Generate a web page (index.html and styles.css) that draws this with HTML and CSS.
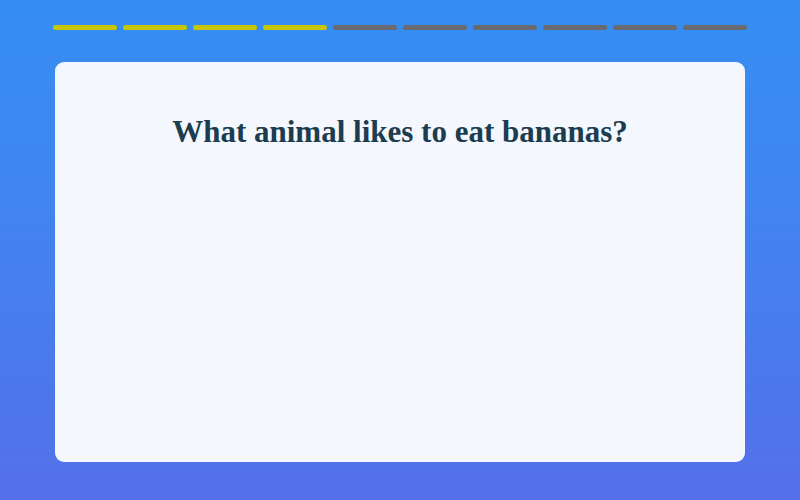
FILE: index.html
```html
<!DOCTYPE html>
<html>
<head>
<meta charset="utf-8">
<link rel="stylesheet" href="styles.css">
</head>
<body>
<div class="page">
  <div class="progress">
    <span class="seg done"></span>
    <span class="seg done"></span>
    <span class="seg done"></span>
    <span class="seg done"></span>
    <span class="seg"></span>
    <span class="seg"></span>
    <span class="seg"></span>
    <span class="seg"></span>
    <span class="seg"></span>
    <span class="seg"></span>
  </div>
  <div class="card">
    <h1 class="question">What animal likes to eat bananas?</h1>
  </div>
</div>
</body>
</html>
```
FILE: styles.css
```css
html, body {
  margin: 0;
  padding: 0;
  height: 100%;
}
body {
  background: linear-gradient(180deg, #368ef2 0%, #3f86f0 35%, #5470e9 100%);
  font-family: "Liberation Serif", "DejaVu Serif", serif;
}
.page {
  height: 500px;
  box-sizing: border-box;
  padding: 25px 53px 0 53px;
  display: flex;
  flex-direction: column;
}
.progress {
  display: flex;
  gap: 6px;
  height: 5px;
}
.seg {
  flex: 1;
  border-radius: 3px;
  background: #686a70;
}
.seg.done {
  background: #c6c607;
}
.card {
  margin: 32px 2px 0 2px;
  height: 400px;
  background: #f4f7fe;
  border-radius: 9px;
  padding-top: 52px;
  box-sizing: border-box;
}
.question {
  margin: 0;
  text-align: center;
  font-size: 31px;
  font-weight: bold;
  color: #1c3c4f;
  line-height: 36px;
}
```
